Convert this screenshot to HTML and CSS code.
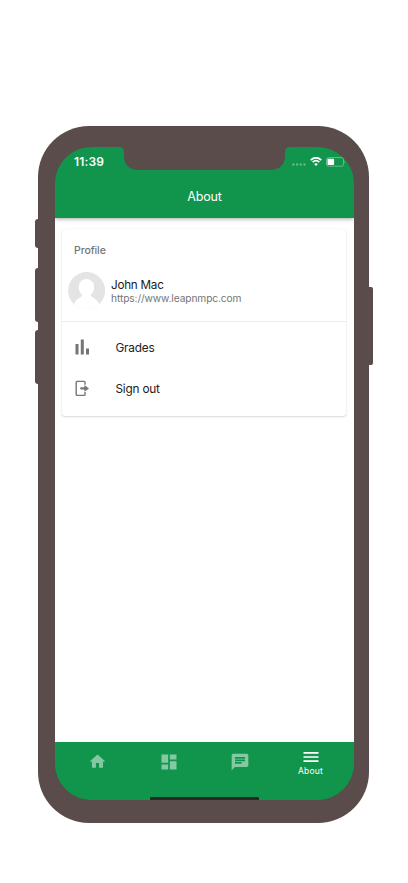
FILE: index.html
```html
<!DOCTYPE html>
<html lang="en">
<head>
    <meta charset="UTF-8">
    <meta name="viewport" content="width=device-width, initial-scale=1.0">
    <title>About</title>
    <link rel="stylesheet" href="styles.css">
</head>
<body>
    <div class="phone">
        <span class="side-button mute"></span>
        <span class="side-button volume-up"></span>
        <span class="side-button volume-down"></span>
        <span class="side-button power"></span>

        <div class="screen">
            <svg class="notch" width="171" height="24" viewBox="0 0 171 24">
                <path d="M0 0H171Q166 0 166 5V9C166 18 160 23 151 23H20C11 23 5 18 5 9V5Q5 0 0 0Z"/>
            </svg>

            <header class="header">
                <div class="status-bar">
                    <span class="time">11:39</span>
                    <div class="status-icons">
                        <svg class="signal" width="14" height="3" viewBox="0 0 14 3">
                            <circle cx="1.4" cy="1.5" r="1.2"/>
                            <circle cx="5.1" cy="1.5" r="1.2"/>
                            <circle cx="8.8" cy="1.5" r="1.2"/>
                            <circle cx="12.5" cy="1.5" r="1.2"/>
                        </svg>
                        <svg class="wifi" width="12" height="9" viewBox="0 0 12 9">
                            <path d="M.7 3.1Q6-1.6 11.3 3.1M2.6 5.2Q6 2.2 9.4 5.2"/>
                            <path class="wifi-dot" d="M4.1 6.9Q6 5.4 7.9 6.9L6 8.9Z"/>
                        </svg>
                        <svg class="battery" width="20" height="10" viewBox="0 0 20 10">
                            <rect class="battery-case" x=".5" y=".6" width="17" height="8.6" rx="2"/>
                            <rect x="1.5" y="1.8" width="6.6" height="6.2" rx=".8"/>
                            <path class="battery-tip" d="M18.6 3.4Q20 4.9 18.6 6.4Z"/>
                        </svg>
                    </div>
                </div>
                <h1 class="title">About</h1>
            </header>

            <main class="content">
                <div class="card">
                    <h2 class="card-label">Profile</h2>
                    <div class="profile">
                        <svg class="avatar" width="38" height="38" viewBox="0 0 38 38">
                            <clipPath id="avatar-clip"><circle cx="18.6" cy="18.6" r="18.5"/></clipPath>
                            <g clip-path="url(#avatar-clip)">
                                <rect class="avatar-bg" width="38" height="38"/>
                                <rect class="avatar-person" x="10.8" y="7" width="15.2" height="17" rx="7.5"/>
                                <path class="avatar-person" d="M3.5 38Q6 28 13 25L15 22H22L24 25Q31 28 33.5 38Z"/>
                            </g>
                        </svg>
                        <div class="profile-text">
                            <span class="name">John Mac</span>
                            <span class="url">https://www.leapnmpc.com</span>
                        </div>
                    </div>
                    <div class="menu">
                        <div class="menu-item">
                            <svg width="17" height="17" viewBox="0 0 17 17">
                                <path d="M1.5 5H4.5V15.5H1.5ZM6.8 .6H9.8V15.5H6.8ZM12 9.6H15V15.5H12Z"/>
                            </svg>
                            <span>Grades</span>
                        </div>
                        <div class="menu-item">
                            <svg width="17" height="17" viewBox="0 0 17 17">
                                <path class="door" d="M11 4.7V2.3Q11 1.4 10.1 1.4H3.1Q2.2 1.4 2.2 2.3V14.500Q2.2 15.4 3.1 15.4H10.1Q11 15.4 11 14.500V12.1"/>
                                <path d="M6.3 7.2H10.4V5L15 8.4L10.4 11.800V9.600H6.3Z"/>
                            </svg>
                            <span>Sign out</span>
                        </div>
                    </div>
                </div>
            </main>

            <nav class="tab-bar">
                <div class="tab">
                    <svg width="19" height="19" viewBox="0 0 24 24">
                        <path d="M10 20v-6h4v6h5v-8h3L12 3 2 12h3v8z"/>
                    </svg>
                </div>
                <div class="tab">
                    <svg width="20" height="20" viewBox="0 0 24 24">
                        <path d="M3 13h8V3H3v10zm0 8h8v-6H3v6zm10 0h8V11h-8v10zm0-18v6h8V3h-8z"/>
                    </svg>
                </div>
                <div class="tab">
                    <svg width="20" height="20" viewBox="0 0 24 24">
                        <path d="M20 2H4c-1.100 0-2 .9-2 2v18l4-4h14c1.100 0 2-.9 2-2V4c0-1.100-.9-2-2-2zM6 9h12v2H6V9zm8 5H6v-2h8v2zm4-6H6V6h12v2z"/>
                    </svg>
                </div>
                <div class="tab active">
                    <svg width="20" height="20" viewBox="0 0 24 24">
                        <path d="M3 18h18v-2H3v2zm0-5h18v-2H3v2zm0-7v2h18V6H3z"/>
                    </svg>
                    <span>About</span>
                </div>
            </nav>
            <span class="home-indicator"></span>
        </div>
    </div>
</body>
</html>
```

FILE: styles.css
```css
* {
    box-sizing: border-box;
}
body {
    margin: 0;
    padding: 126px 0 0 38px;
    background-color: #fff;
    font-family: Inter, Roboto, sans-serif;
}
.phone {
    position: relative;
    width: 331px;
    height: 696.5px;
    padding: 21px 15px 23px 17px;
    border-radius: 51px;
    background-color: #594c4b;
}
.side-button {
    position: absolute;
    left: -3px;
    width: 6px;
    border-radius: 3px;
    background-color: #594c4b;
}
.mute {
    top: 93px;
    height: 29px;
}
.volume-up {
    top: 142px;
    height: 54px;
}
.volume-down {
    top: 204px;
    height: 54px;
}
.power {
    top: 161px;
    left: auto;
    right: -4px;
    height: 78px;
    border-radius: 2px;
}
.screen {
    position: relative;
    display: flex;
    flex-direction: column;
    height: 100%;
    border-radius: 37px;
    background-color: #11944b;
    overflow: hidden;
}
.notch {
    position: absolute;
    top: 0;
    left: 64px;
    z-index: 2;
    fill: #594c4b;
}
.header {
    height: 70.5px;
    background-color: #11944b;
    box-shadow: 0 1px 4px rgba(0,0,0,0.35);
    color: #fff;
    z-index: 1;
}
.status-bar {
    display: flex;
    justify-content: space-between;
    align-items: center;
    height: 29px;
    padding: 0 8px 0 19px;
}
.time {
    font-size: 12px;
    font-weight: 600;
    letter-spacing: 0.15px;
}
.status-icons {
    display: flex;
    align-items: center;
    gap: 4px;
    fill: #fff;
}
.signal {
    margin-top: 5px;
    opacity: 0.35;
}
.wifi {
    fill: none;
    stroke: #fff;
    stroke-width: 1.7;
}
.wifi-dot {
    fill: #fff;
    stroke: none;
}
.battery-case {
    fill: none;
    stroke: #fff;
    stroke-width: 0.8;
    opacity: 0.45;
}
.battery-tip {
    opacity: 0.5;
}
.title {
    margin: 0;
    font-size: 12.5px;
    font-weight: 400;
    line-height: 42px;
    letter-spacing: -0.2px;
    text-align: center;
}
.content {
    flex: 1;
    padding: 11.5px 8px 0 7px;
    background-color: #fff;
}
.card {
    height: 187px;
    border-radius: 3px;
    background-color: #fff;
    box-shadow: 0 1px 2px rgba(0,0,0,0.15), 0 0 1px rgba(0,0,0,0.12);
}
.card-label {
    margin: 0;
    padding: 15px 0 0 12px;
    color: #757575;
    font-size: 10.5px;
    font-weight: 500;
    line-height: 14px;
    letter-spacing: -0.1px;
}
.profile {
    display: flex;
    align-items: center;
    gap: 5px;
    height: 64px;
    padding: 3px 0 0 6px;
    border-bottom: 1px solid #ebebeb;
}
.avatar-bg {
    fill: #e4e4e4;
}
.avatar-person {
    fill: #fff;
}
.profile-text {
    display: flex;
    flex-direction: column;
}
.name {
    color: #212121;
    font-size: 11.7px;
    line-height: 14px;
    letter-spacing: -0.25px;
}
.url {
    color: #757575;
    font-size: 10.2px;
    line-height: 13px;
    letter-spacing: -0.1px;
}
.menu {
    padding-top: 5px;
}
.menu-item {
    display: flex;
    align-items: center;
    gap: 24.5px;
    height: 41px;
    padding-left: 12px;
    color: #212121;
    font-size: 11.8px;
    letter-spacing: -0.2px;
}
.menu-item span {
    padding-top: 1px;
}
.menu-item svg {
    fill: #757575;
}
.menu-item .door {
    fill: none;
    stroke: #757575;
    stroke-width: 1.4;
}
.tab-bar {
    display: flex;
    height: 58px;
    padding: 0 8px 0 7px;
    background-color: #11944b;
}
.tab {
    flex: 1;
    display: flex;
    flex-direction: column;
    align-items: center;
    padding-top: 10.5px;
    fill: #84c9a3;
}
.tab.active {
    padding-top: 5.5px;
    color: #fff;
    fill: #fff;
    font-size: 8.5px;
    line-height: 9px;
    letter-spacing: 0.2px;
}
.home-indicator {
    position: absolute;
    left: 95px;
    bottom: 0;
    width: 109px;
    height: 2.5px;
    border-radius: 1px 1px 0 0;
    background-color: #242b26;
}
```
